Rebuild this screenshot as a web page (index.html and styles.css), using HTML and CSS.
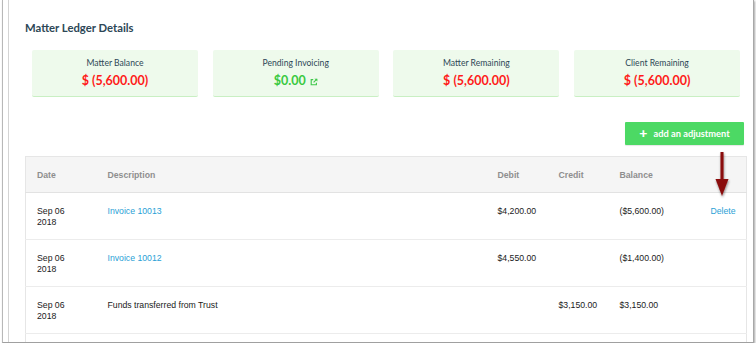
FILE: index.html
```html
<!DOCTYPE html>
<html>
<head>
<meta charset="utf-8">
<link rel="stylesheet" href="styles.css">
</head>
<body>
<div class="window">
  <div class="panel">
    <h2 class="title">Matter Ledger Details</h2>
    <div class="cards">
      <div class="card">
        <div class="card-label">Matter Balance</div>
        <div class="card-value red">$ (5,600.00)</div>
      </div>
      <div class="card">
        <div class="card-label">Pending Invoicing</div>
        <div class="card-value green">$0.00 <svg class="ext" viewBox="0 0 10 10" width="8" height="8"><path d="M4 2H1.5v6.5H8V6" fill="none" stroke="#3fc84a" stroke-width="1.4"/><path d="M5.5 0.8h3.7v3.7z" fill="#3fc84a"/><path d="M8.5 1.5L4.5 5.5" stroke="#3fc84a" stroke-width="1.4"/></svg></div>
      </div>
      <div class="card">
        <div class="card-label">Matter Remaining</div>
        <div class="card-value red">$ (5,600.00)</div>
      </div>
      <div class="card">
        <div class="card-label">Client Remaining</div>
        <div class="card-value red">$ (5,600.00)</div>
      </div>
    </div>
    <div class="actions">
      <button class="btn"><span class="plus">+</span>add an adjustment</button>
    </div>
    <div class="table-wrap">
      <table class="ledger">
        <colgroup>
          <col class="c-date"><col class="c-desc"><col class="c-num"><col class="c-num"><col class="c-bal"><col class="c-act">
        </colgroup>
        <thead>
          <tr><th>Date</th><th>Description</th><th>Debit</th><th>Credit</th><th>Balance</th><th></th></tr>
        </thead>
        <tbody>
          <tr><td>Sep 06<br>2018</td><td><a class="link">Invoice 10013</a></td><td>$4,200.00</td><td></td><td>($5,600.00)</td><td><a class="link">Delete</a></td></tr>
          <tr><td>Sep 06<br>2018</td><td><a class="link">Invoice 10012</a></td><td>$4,550.00</td><td></td><td>($1,400.00)</td><td></td></tr>
          <tr><td>Sep 06<br>2018</td><td>Funds transferred from Trust</td><td></td><td>$3,150.00</td><td>$3,150.00</td><td></td></tr>
          <tr class="partial"><td></td><td></td><td></td><td></td><td></td><td></td></tr>
        </tbody>
      </table>
      <svg class="arrow" viewBox="0 0 20 50" width="20" height="50">
        <defs>
          <filter id="sh" x="-50%" y="-20%" width="200%" height="150%">
            <feDropShadow dx="0.5" dy="1.5" stdDeviation="1" flood-color="#000" flood-opacity="0.45"/>
          </filter>
        </defs>
        <g filter="url(#sh)">
          <rect x="8.5" y="1" width="3" height="29" fill="#8a0d0d"/>
          <path d="M3.5 28 L16.5 28 L10 45 Z" fill="#8a0d0d"/>
        </g>
      </svg>
    </div>
  </div>
</div>
</body>
</html>
```
FILE: styles.css
```css
html, body {
  margin: 0;
  padding: 0;
  background: #ffffff;
}
.window {
  margin-left: 2px;
  width: 750px;
  height: 342px;
  border-left: 1px solid #b8b8b8;
  border-right: 1px solid #a8a8a8;
  border-bottom: 1px solid #a0a0a0;
  box-shadow: 1px 1px 2px rgba(0,0,0,0.35);
  overflow: hidden;
  background: #fff;
}
.panel {
  margin-left: 5px;
  height: 100%;
  border-left: 1px solid #d4d4d4;
  padding-left: 16px;
  position: relative;
}
.title {
  margin: 0;
  padding-top: 20px;
  font-family: Lato, "Open Sans", sans-serif;
  font-weight: bold;
  font-size: 11.3px;
  line-height: 16px;
  color: #2d4756;
}
.cards {
  display: grid;
  grid-template-columns: repeat(4, 166px);
  column-gap: 14.7px;
  margin: 14px 0 0 7px;
}
.card {
  height: 46px;
  background: #eefaec;
  border-bottom: 1.5px solid #c9efc3;
  border-radius: 2px;
  text-align: center;
  font-family: Lato, "Open Sans", sans-serif;
}
.card-label {
  padding-top: 8px;
  font-size: 8.6px;
  line-height: 11px;
  color: #2d4756;
}
.card-value {
  margin-top: 3px;
  font-size: 12.5px;
  font-weight: bold;
  line-height: 17px;
}
.red { color: #ff1a1a; }
.green { color: #39c940; }
.ext {
  vertical-align: -0.5px;
  margin-left: 1px;
}
.actions {
  display: flex;
  justify-content: flex-end;
  width: 719px;
  margin-top: 25px;
}
.btn {
  width: 119px;
  height: 23px;
  border: none;
  border-radius: 1px;
  background: #4cd964;
  color: #fff;
  font-family: Lato, "Open Sans", sans-serif;
  font-weight: bold;
  font-size: 9.3px;
  padding: 0;
  display: flex;
  align-items: center;
  justify-content: center;
  box-shadow: 0 1px 1px rgba(0,0,0,0.1);
}
.plus {
  font-size: 14px;
  font-weight: 900;
  margin-right: 6px;
  line-height: 10px;
  margin-top: -1px;
}
.table-wrap {
  position: relative;
  margin-top: 11px;
  width: 720px;
}
.ledger {
  width: 721px;
  border-collapse: collapse;
  table-layout: fixed;
  border: 1px solid #e6e6e6;
  border-bottom: none;
  font-family: "Liberation Sans", Arial, sans-serif;
  font-size: 8.7px;
  color: #1a1a1a;
}
.c-date { width: 71px; }
.c-desc { width: 390px; }
.c-num { width: 61px; }
.c-bal { width: 91px; }
.c-act { width: 47px; }
.ledger th {
  background: #f5f5f5;
  color: #8e8e8e;
  font-weight: bold;
  text-align: left;
  height: 35px;
  padding: 0 0 0 11px;
  border-bottom: 1px solid #e2e2e2;
  vertical-align: middle;
}
.ledger td {
  height: 47px;
  box-sizing: border-box;
  padding: 13px 0 0 11px;
  line-height: 10.5px;
  vertical-align: top;
  border-bottom: 1px solid #ececec;
}
.link {
  color: #2a9fd6;
  cursor: pointer;
}
.arrow {
  position: absolute;
  left: 687px;
  top: -5px;
}
```
